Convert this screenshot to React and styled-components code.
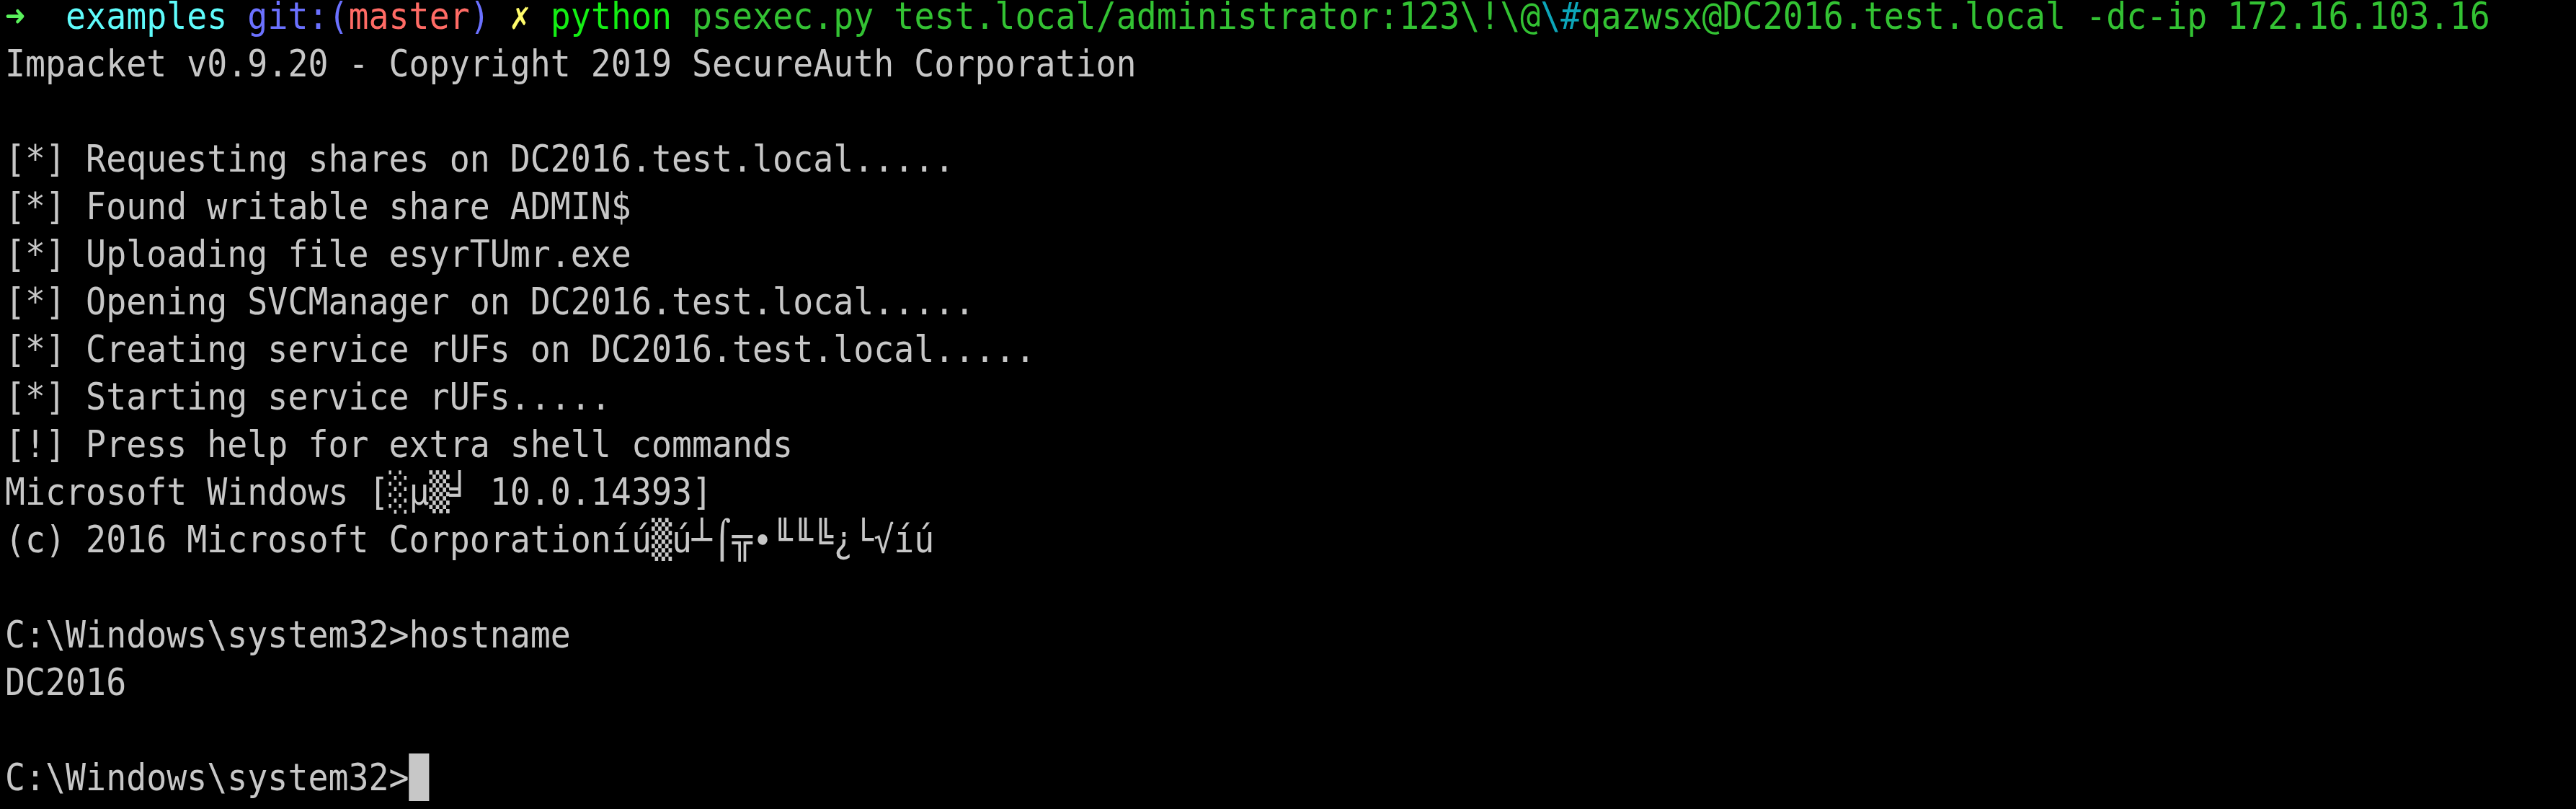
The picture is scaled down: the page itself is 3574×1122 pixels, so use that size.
import React from "react";
import styled, { createGlobalStyle } from "styled-components";

const Global = createGlobalStyle`
  html, body {
    margin: 0;
    padding: 0;
    background: #000;
    overflow: hidden;
  }
  #root {
    background: #000;
  }
`;

const tones = {
  text: "#c7c7c7",
  arrow: "#5af25c",
  dir: "#5ffbfb",
  git: "#6b71ff",
  branch: "#ff6b65",
  dirty: "#fffb6a",
  cmd: "#14ee14",
  arg: "#33c233",
  esc: "#0ca6b9",
};

const Screen = styled.div`
  width: 3574px;
  height: 1122px;
  overflow: hidden;
  background: #000;
`;

const Terminal = styled.div`
  font-family: "DejaVu Sans Mono", "Liberation Mono", monospace;
  font-size: 51.3px;
  line-height: 66px;
  color: ${tones.text};
  white-space: pre;
  margin-top: -11px;
  padding-left: 7.7px;
  width: 3940px;
  transform: scaleX(0.9076);
  transform-origin: 0 0;
`;

const Line = styled.div`
  height: 66px;
`;

const Seg = styled.span`
  color: ${(p) => tones[p.$tone] || tones.text};
`;

const Cell = styled.span`
  display: inline-block;
  width: 1ch;
  text-align: center;
  color: ${(p) => tones[p.$tone] || tones.text};
  font-size: ${(p) => p.$size || "1em"};
  font-weight: ${(p) => (p.$bold ? 700 : 400)};
`;

const Cursor = styled.span`
  display: inline-block;
  width: 1ch;
  height: 66px;
  vertical-align: top;
  background: ${tones.text};
`;

const output = [
  "Impacket v0.9.20 - Copyright 2019 SecureAuth Corporation",
  "",
  "[*] Requesting shares on DC2016.test.local.....",
  "[*] Found writable share ADMIN$",
  "[*] Uploading file esyrTUmr.exe",
  "[*] Opening SVCManager on DC2016.test.local.....",
  "[*] Creating service rUFs on DC2016.test.local.....",
  "[*] Starting service rUFs.....",
  "[!] Press help for extra shell commands",
  "Microsoft Windows [\u2591\u00b5\u2592\u255b 10.0.14393]",
  "(c) 2016 Microsoft Corporation\u00ed\u00fa\u2592\u00fa\u2534\u2320\u2566\u2219\u2559\u2559\u255a\u00bf\u2514\u221a\u00ed\u00fa",
  "",
  "C:\\Windows\\system32>hostname",
  "DC2016",
  "",
];

export default function App() {
  return (
    <Screen>
      <Global />
      <Terminal>
        <Line>
          <Cell $tone="arrow" $size="1em" $bold>➜</Cell>
          <Seg>{"  "}</Seg>
          <Seg $tone="dir">examples</Seg>
          <Seg> </Seg>
          <Seg $tone="git">git:(</Seg>
          <Seg $tone="branch">master</Seg>
          <Seg $tone="git">)</Seg>
          <Seg> </Seg>
          <Cell $tone="dirty">✗</Cell>
          <Seg> </Seg>
          <Seg $tone="cmd">python</Seg>
          <Seg $tone="arg">{" psexec.py test.local/administrator:123\\!\\@"}</Seg>
          <Seg $tone="esc">{"\\#"}</Seg>
          <Seg $tone="arg">qazwsx@DC2016.test.local -dc-ip 172.16.103.16</Seg>
        </Line>
        {output.map((text, i) => (
          <Line key={i}>{text}</Line>
        ))}
        <Line>
          {"C:\\Windows\\system32>"}
          <Cursor />
        </Line>
      </Terminal>
    </Screen>
  );
}
